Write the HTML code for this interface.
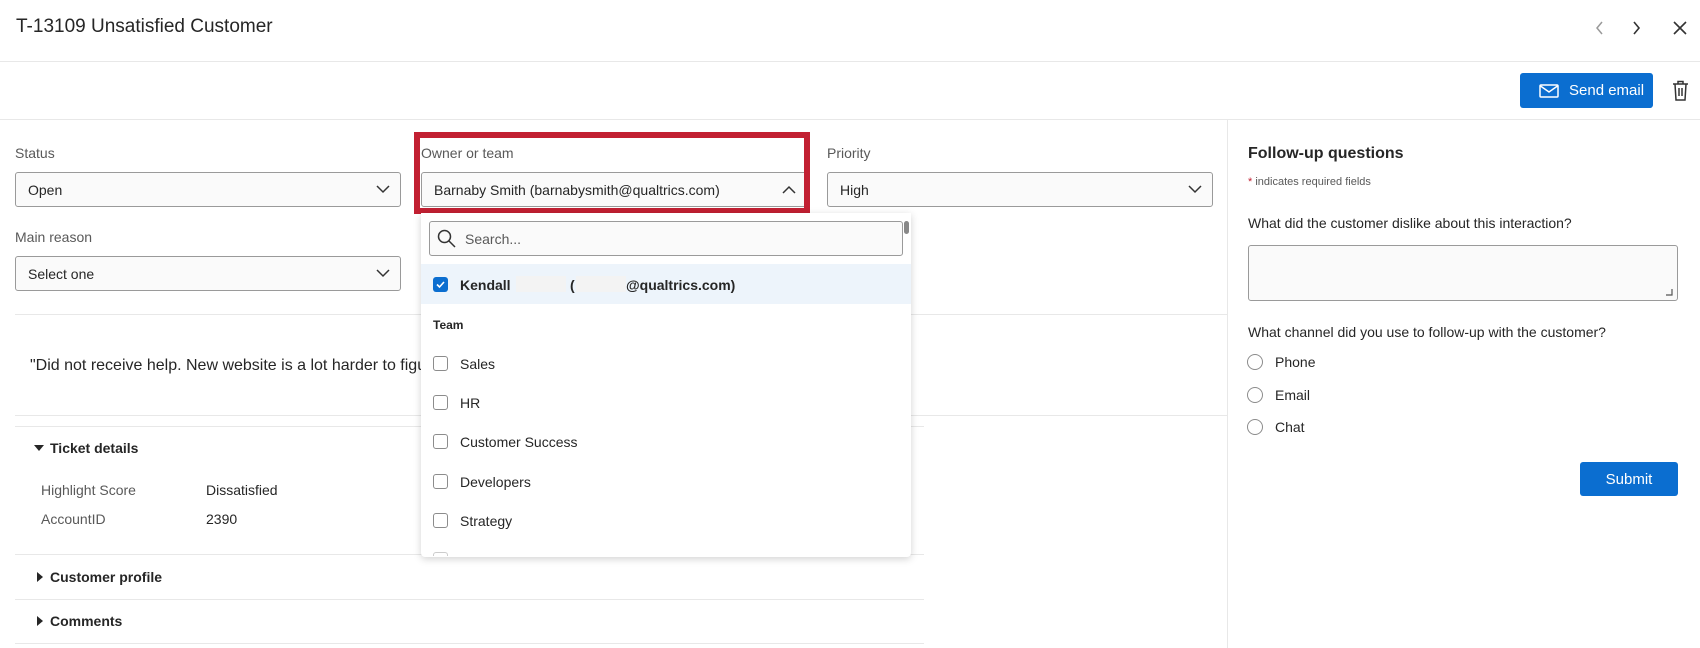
<!DOCTYPE html>
<html><head><meta charset="utf-8">
<style>
*{box-sizing:border-box;margin:0;padding:0}
body{width:1700px;height:648px;overflow:hidden;background:#fff;font-family:"Liberation Sans",sans-serif;color:#262626;position:relative}
.a{position:absolute}
.t{position:absolute;white-space:nowrap;line-height:1}
.hl{position:absolute;height:1px;background:#e8e8e8}
.sel{position:absolute;height:35px;background:#fafafa;border:1px solid #9a9a9a;border-radius:3px}
.sel span{position:absolute;left:12px;top:9px;font-size:14px;color:#262626;white-space:nowrap}
.sel svg{position:absolute;right:10px;top:12px}
.lbl{font-size:14px;color:#595959}
.cb{position:absolute;left:433px;width:15px;height:15px;border:1.3px solid #8c8c8c;border-radius:3px;background:#fff}
.it{position:absolute;left:460px;font-size:14px;color:#262626;line-height:1}
.rd{position:absolute;left:1247px;width:16px;height:16px;border:1.3px solid #8c8c8c;border-radius:50%}
.rt{position:absolute;left:1275px;font-size:14px;color:#262626;line-height:1}
</style></head><body>

<div class="t" style="left:16px;top:17px;font-size:19px;color:#262626">T-13109 Unsatisfied Customer</div>
<svg class="a" style="left:1595px;top:21px" width="10" height="14"><path d="M7 1 L2 7 L7 13" fill="none" stroke="#999" stroke-width="1.5"/></svg>
<svg class="a" style="left:1631px;top:21px" width="10" height="14"><path d="M3 1 L8 7 L3 13" fill="none" stroke="#333" stroke-width="1.6"/></svg>
<svg class="a" style="left:1673px;top:21px" width="14" height="14"><path d="M1 1 L13 13 M13 1 L1 13" fill="none" stroke="#333" stroke-width="1.6"/></svg>
<div class="hl" style="left:0;top:61px;width:1700px"></div>

<div class="a" style="left:1520px;top:73px;width:133px;height:35px;background:#0b6ed0;border-radius:3px"></div>
<svg class="a" style="left:1539px;top:84px" width="20" height="14"><rect x="1" y="1" width="18" height="12" rx="1" fill="none" stroke="#fff" stroke-width="1.5"/><path d="M1.5 2 L10 8 L18.5 2" fill="none" stroke="#fff" stroke-width="1.5"/></svg>
<div class="t" style="left:1569px;top:83px;font-size:15px;color:#fff">Send email</div>
<svg class="a" style="left:1672px;top:80px" width="17" height="21"><path d="M1 4 H16 M6 4 V1.5 H11 V4 M3 4 L4 20 H13 L14 4 M7 8 V16 M10 8 V16" fill="none" stroke="#333" stroke-width="1.5"/></svg>
<div class="hl" style="left:0;top:119px;width:1700px"></div>
<div class="a" style="left:1227px;top:119px;width:1px;height:529px;background:#e8e8e8"></div>

<div class="t lbl" style="left:15px;top:146px">Status</div>
<div class="sel" style="left:15px;top:172px;width:386px"><span>Open</span><svg width="14" height="9"><path d="M1 1 L7 7 L13 1" fill="none" stroke="#333" stroke-width="1.5"/></svg></div>
<div class="t lbl" style="left:15px;top:230px">Main reason</div>
<div class="sel" style="left:15px;top:256px;width:386px"><span>Select one</span><svg width="14" height="9"><path d="M1 1 L7 7 L13 1" fill="none" stroke="#333" stroke-width="1.5"/></svg></div>

<div class="t lbl" style="left:421px;top:146px">Owner or team</div>
<div class="sel" style="left:421px;top:172px;width:386px"><span>Barnaby Smith (barnabysmith@qualtrics.com)</span><svg width="14" height="9"><path d="M1 8 L7 2 L13 8" fill="none" stroke="#333" stroke-width="1.5"/></svg></div>
<div class="a" style="left:414px;top:132px;width:396px;height:82px;border:6px solid #c22032"></div>

<div class="t lbl" style="left:827px;top:146px">Priority</div>
<div class="sel" style="left:827px;top:172px;width:386px"><span>High</span><svg width="14" height="9"><path d="M1 1 L7 7 L13 1" fill="none" stroke="#333" stroke-width="1.5"/></svg></div>

<div class="hl" style="left:15px;top:314px;width:1212px"></div>
<div class="t" style="left:30px;top:358px;font-size:16px;color:#262626">"Did not receive help. New website is a lot harder to figure out."</div>
<div class="hl" style="left:15px;top:415px;width:1212px"></div>
<div class="hl" style="left:15px;top:426px;width:909px"></div>
<svg class="a" style="left:34px;top:445px" width="10" height="6"><path d="M0 0 H10 L5 6 Z" fill="#262626"/></svg>
<div class="t" style="left:50px;top:441px;font-size:14px;font-weight:bold">Ticket details</div>
<div class="t" style="left:41px;top:483px;font-size:14px;color:#595959">Highlight Score</div>
<div class="t" style="left:206px;top:483px;font-size:14px">Dissatisfied</div>
<div class="t" style="left:41px;top:512px;font-size:14px;color:#595959">AccountID</div>
<div class="t" style="left:206px;top:512px;font-size:14px">2390</div>
<div class="hl" style="left:15px;top:554px;width:909px"></div>
<svg class="a" style="left:37px;top:572px" width="6" height="10"><path d="M0 0 V10 L6 5 Z" fill="#262626"/></svg>
<div class="t" style="left:50px;top:570px;font-size:14px;font-weight:bold">Customer profile</div>
<div class="hl" style="left:15px;top:599px;width:909px"></div>
<svg class="a" style="left:37px;top:616px" width="6" height="10"><path d="M0 0 V10 L6 5 Z" fill="#262626"/></svg>
<div class="t" style="left:50px;top:614px;font-size:14px;font-weight:bold">Comments</div>
<div class="hl" style="left:15px;top:643px;width:909px"></div>

<!-- dropdown -->
<div class="a" style="left:421px;top:213px;width:490px;height:344px;background:#fff;border-radius:0 0 4px 4px;box-shadow:0 2px 8px rgba(0,0,0,.18);overflow:hidden">
</div>
<div class="a" style="left:429px;top:221px;width:474px;height:35px;border:1px solid #9a9a9a;border-radius:3px;background:#fafafa"></div>
<svg class="a" style="left:437px;top:229px" width="19" height="19"><circle cx="7.5" cy="7.5" r="6" fill="none" stroke="#333" stroke-width="1.5"/><path d="M12 12 L18 18" stroke="#333" stroke-width="1.5"/></svg>
<div class="t" style="left:465px;top:232px;font-size:14px;color:#595959">Search...</div>
<div class="a" style="left:904px;top:221px;width:5px;height:13px;background:#888;border-radius:3px"></div>
<div class="a" style="left:421px;top:264px;width:490px;height:40px;background:#edf4fb"></div>
<div class="a" style="left:433px;top:277px;width:15px;height:15px;background:#0b6ed0;border-radius:3px"></div>
<svg class="a" style="left:435px;top:279px" width="11" height="11"><path d="M2 5.5 L4.5 8 L9 3" fill="none" stroke="#fff" stroke-width="1.6"/></svg>
<div class="it" style="top:278px;font-weight:bold">Kendall</div>
<div class="a" style="left:516px;top:276px;width:50px;height:16px;background:#f3f3f3"></div>
<div class="it" style="left:570px;top:278px;font-weight:bold">(</div>
<div class="a" style="left:576px;top:276px;width:50px;height:16px;background:#f3f3f3"></div>
<div class="it" style="left:626px;top:278px;font-weight:bold">@qualtrics.com)</div>
<div class="t" style="left:433px;top:319px;font-size:12px;font-weight:bold">Team</div>
<div class="cb" style="top:356px"></div><div class="it" style="top:357px">Sales</div>
<div class="cb" style="top:395px"></div><div class="it" style="top:396px">HR</div>
<div class="cb" style="top:434px"></div><div class="it" style="top:435px">Customer Success</div>
<div class="cb" style="top:474px"></div><div class="it" style="top:475px">Developers</div>
<div class="cb" style="top:513px"></div><div class="it" style="top:514px">Strategy</div>
<div class="a" style="left:433px;top:552px;width:15px;height:4px;border:1.3px solid #ccc;border-bottom:none;border-radius:3px 3px 0 0"></div>

<!-- right panel -->
<div class="t" style="left:1248px;top:146px;font-size:16px;font-weight:bold">Follow-up questions</div>
<div class="t" style="left:1248px;top:177px;font-size:11px;color:#595959"><span style="color:#c22032">*</span> indicates required fields</div>
<div class="t" style="left:1248px;top:216px;font-size:14px">What did the customer dislike about this interaction?</div>
<div class="a" style="left:1248px;top:245px;width:430px;height:56px;border:1px solid #9a9a9a;border-radius:3px;background:#fafafa"></div>
<svg class="a" style="left:1666px;top:289px" width="7" height="7"><path d="M6 0 V6 H0" fill="none" stroke="#555" stroke-width="1.2"/></svg>
<div class="t" style="left:1248px;top:325px;font-size:14px">What channel did you use to follow-up with the customer?</div>
<div class="rd" style="top:354px"></div><div class="rt" style="top:355px">Phone</div>
<div class="rd" style="top:387px"></div><div class="rt" style="top:388px">Email</div>
<div class="rd" style="top:419px"></div><div class="rt" style="top:420px">Chat</div>
<div class="a" style="left:1580px;top:462px;width:98px;height:34px;background:#0b6ed0;border-radius:3px"></div>
<div class="t" style="left:1580px;top:472px;width:98px;text-align:center;font-size:15px;color:#fff">Submit</div>
</body></html>
